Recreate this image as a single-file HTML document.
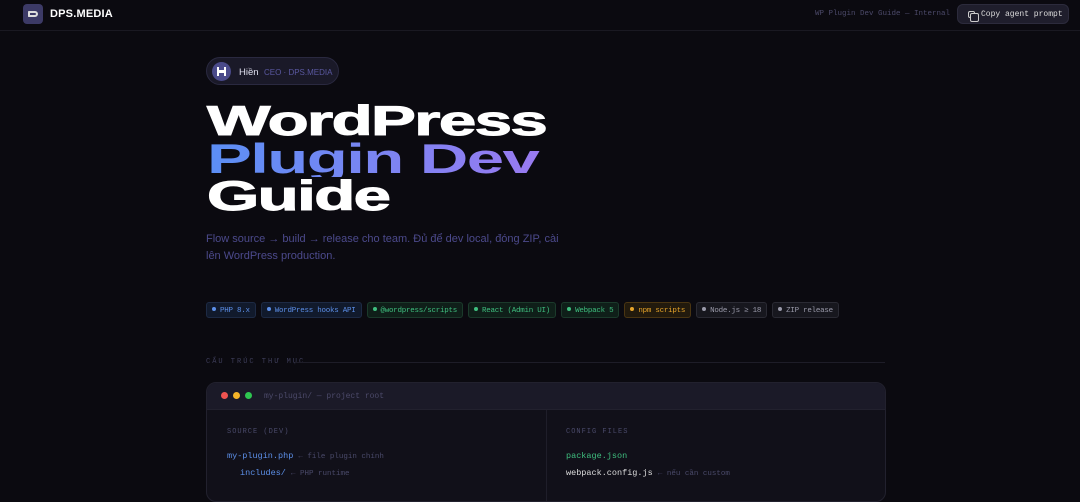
<!DOCTYPE html>
<html><head><meta charset="utf-8"><style>
*{margin:0;padding:0;box-sizing:border-box}
body{width:1080px;height:483px;overflow:hidden;background:#0b0a10;font-family:"Liberation Sans",sans-serif;color:#fff;position:relative}
.mono{font-family:"Liberation Mono","DejaVu Sans Mono",monospace}
.nav{position:absolute;left:0;top:0;width:1080px;height:31px;border-bottom:1px solid #1a1922}
.logo{position:absolute;left:23px;top:4px;width:20px;height:20px;border-radius:4px;background:#3c3a66}
.logo span{position:absolute;left:5px;top:7px;width:10px;height:6px;border:2px solid #ddd;border-radius:1px 4px 4px 1px}
.brand{position:absolute;left:50px;top:8px;font-weight:bold;font-size:11px;letter-spacing:.2px}
.navr{position:absolute;left:815px;top:10px;font-size:7.5px;color:#4c4a6a;white-space:nowrap}
.btn{position:absolute;left:957px;top:4px;width:112px;height:20px;border-radius:6px;background:#1f1e2c;border:1px solid #2c2b3c;font-size:8px;color:#ddd;padding:5px 0 0 23px;white-space:nowrap}
.btn i{position:absolute;left:10px;top:6px;width:7px;height:7px;border:1px solid #ccc;border-radius:2px}
.btn i:after{content:"";position:absolute;left:1px;top:1px;width:7px;height:7px;border:1px solid #ccc;border-radius:2px;background:#1f1e2c}
.chip{position:absolute;left:206px;top:57px;width:133px;height:28px;border-radius:14px;background:#1a1928;border:1px solid #2a2940}
.av{position:absolute;left:5px;top:4px;width:19px;height:19px;border-radius:50%;background:#4a4a8a}
.av b{position:absolute;left:5px;top:8px;width:9px;height:3px;background:#fff}
.av b:before,.av b:after{content:"";position:absolute;top:-3px;width:2px;height:9px;background:#fff}
.av b:before{left:0}.av b:after{right:0}
.ch1{position:absolute;left:32px;top:9px;font-size:9.5px;color:#e0e0f0}
.ch2{position:absolute;left:57px;top:10px;font-size:8px;color:#5a58a0;white-space:nowrap}
h1{position:absolute;left:207px;top:102px;font-size:42px;line-height:37.5px;font-weight:bold;letter-spacing:-1px}
h1 span{display:block;transform:scaleX(1.6);transform-origin:left;white-space:nowrap;-webkit-text-stroke:1px currentColor}
h1 .g{-webkit-text-stroke:0}
.g{background:linear-gradient(90deg,#5b8ff5,#9a7af0);-webkit-background-clip:text;color:transparent}
.sub{position:absolute;left:206px;top:231px;font-size:11px;line-height:17px;color:#4c4a8c;width:360px}
.tags{position:absolute;left:206px;top:302px;display:flex;gap:5px}
.t{height:16px;border-radius:3px;font-size:7.5px;padding:4px 5px 0;border:1px solid;white-space:nowrap;letter-spacing:-.25px}
.t:before{content:"";display:inline-block;width:4px;height:4px;border-radius:50%;background:currentColor;margin-right:4px;vertical-align:1px}
.b{color:#5c8fe8;background:#111a2c;border-color:#1d2a44}
.gr{color:#3fbf7f;background:#0f1f19;border-color:#1b3a2b}
.y{color:#e6a42a;background:#221a0d;border-color:#4a3512}
.s{color:#9a9aaa;background:#17171e;border-color:#2a2a33}
.lab{position:absolute;left:206px;top:358px;font-size:7px;letter-spacing:2px;color:#3e3e5a}
.line{position:absolute;left:295px;top:362px;width:590px;height:1px;background:#1e1d28}
.win{position:absolute;left:206px;top:382px;width:680px;height:120px;border-radius:10px;background:#111019;border:1px solid #22212e;overflow:hidden}
.wh{height:27px;background:#1b1a28;border-bottom:1px solid #22212e;position:relative}
.d{position:absolute;top:9px;width:7px;height:7px;border-radius:50%}
.wt{position:absolute;left:57px;top:9px;font-size:8px;color:#4c4a6a}
.col2{position:absolute;left:339px;top:27px;width:1px;height:100px;background:#1f1e2a}
.tx{position:absolute;font-size:8.5px;white-space:nowrap}
.h{font-size:7px;letter-spacing:1px;color:#4a4a6a}
.c{color:#4a4a6a;font-size:7.5px}
</style></head><body>
<div class="nav">
<div class="logo"><span></span></div><div class="brand">DPS.MEDIA</div>
<div class="navr mono">WP Plugin Dev Guide — Internal</div>
<div class="btn mono"><i></i>Copy agent prompt</div>
</div>
<div class="chip"><div class="av"><b></b></div><div class="ch1">Hiền</div><div class="ch2">CEO · DPS.MEDIA</div></div>
<h1><span>WordPress</span><span class="g">Plugin Dev</span><span>Guide</span></h1>
<div class="sub">Flow source → build → release cho team. Đủ để dev local, đóng ZIP, cài lên WordPress production.</div>
<div class="tags mono">
<div class="t b">PHP 8.x</div><div class="t b">WordPress hooks API</div><div class="t gr">@wordpress/scripts</div><div class="t gr">React (Admin UI)</div><div class="t gr">Webpack 5</div><div class="t y">npm scripts</div><div class="t s">Node.js ≥ 18</div><div class="t s">ZIP release</div>
</div>
<div class="lab mono">CẤU TRÚC THƯ MỤC</div><div class="line"></div>
<div class="win mono">
<div class="wh"><div class="d" style="left:14px;background:#ef5350"></div><div class="d" style="left:26px;background:#f5b428"></div><div class="d" style="left:38px;background:#2ec650"></div><div class="wt">my-plugin/ — project root</div></div>
<div class="col2"></div>
<div class="tx h" style="left:20px;top:45px">SOURCE (DEV)</div>
<div class="tx" style="left:20px;top:68px;color:#5c8fe8">my-plugin.php <span class="c">← file plugin chính</span></div>
<div class="tx" style="left:33px;top:85px;color:#5c8fe8">includes/ <span class="c">← PHP runtime</span></div>
<div class="tx h" style="left:359px;top:45px">CONFIG FILES</div>
<div class="tx" style="left:359px;top:68px;color:#3fbf7f">package.json</div>
<div class="tx" style="left:359px;top:85px;color:#ddd">webpack.config.js <span class="c">← nếu cần custom</span></div>
</div>
</body></html>
